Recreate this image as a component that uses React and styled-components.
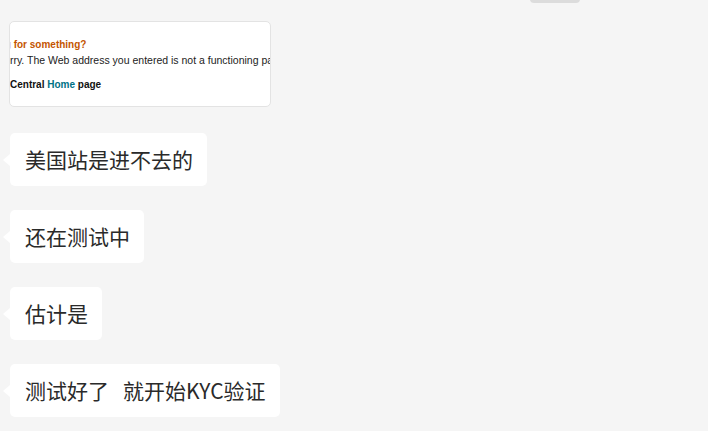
import React from 'react'
import styled, { createGlobalStyle } from 'styled-components'

const GlobalStyle = createGlobalStyle`
  html, body {
    margin: 0;
    padding: 0;
    background: #f5f5f5;
  }
  body {
    font-family: "Noto Sans CJK SC", "Noto Sans", sans-serif;
  }
`

const Chat = styled.div`
  width: 708px;
  height: 431px;
  overflow: hidden;
  display: flex;
  flex-direction: column;
  align-items: flex-start;
  padding: 0 0 0 10px;
  box-sizing: border-box;
`

const TimePillRow = styled.div`
  align-self: stretch;
  display: flex;
  justify-content: flex-end;
  padding-right: 128px;
  height: 0;
`

const TimePill = styled.div`
  width: 50px;
  height: 20px;
  margin-top: -17px;
  border-radius: 4px;
  background: #dcdcdc;
`

const ImageCard = styled.div`
  margin: 21px 0 0 -1px;
  width: 262px;
  height: 86px;
  box-sizing: border-box;
  border: 1px solid #e3e3e3;
  border-radius: 5px;
  background: #fff;
  overflow: hidden;
  font-family: "Liberation Sans", Arial, sans-serif;
  font-size: 10px;
  color: #111;
  white-space: nowrap;
`

const Shot = styled.div`
  margin-left: ${p => p.$shift}px;
  padding-top: ${p => p.$top || 0}px;
`

const Heading = styled.div`
  color: #c45500;
  font-weight: bold;
  line-height: 14px;
`

const Line = styled.div`
  font-size: 10.5px;
  line-height: 16px;
  color: #222;
`

const Footer = styled.div`
  margin-top: 10px;
  line-height: 14px;
  font-weight: bold;
  span { color: #007185; }
`

const Bubble = styled.div`
  position: relative;
  margin-top: ${p => p.$gap}px;
  background: #fff;
  border-radius: 5px;
  padding: 12px 14px 12px 15px;
  font-size: 21px;
  line-height: 29px;
  color: #2a2a2a;
  white-space: pre;

  &::before {
    content: '';
    position: absolute;
    left: -7px;
    top: 50%;
    margin-top: -6px;
    border-style: solid;
    border-width: 6px 7px 6px 0;
    border-color: transparent #fff transparent transparent;
  }
`

const messages = [
  '美国站是进不去的',
  '还在测试中',
  '估计是',
  '测试好了   就开始KYC验证',
]

export default function App() {
  return (
    <>
      <GlobalStyle />
      <Chat>
        <TimePillRow>
          <TimePill />
        </TimePillRow>
        <ImageCard>
          <Shot $shift={-38} $top={16}>
            <Heading>Looking for something?</Heading>
          </Shot>
          <Shot $shift={-41}>
            <Line>We're sorry. The Web address you entered is not a functioning page on our site.</Line>
          </Shot>
          <Footer>
            Central <span>Home</span> page
          </Footer>
        </ImageCard>
        {messages.map((m, i) => (
          <Bubble key={i} $gap={i === 0 ? 26 : 24}>{m}</Bubble>
        ))}
      </Chat>
    </>
  )
}
